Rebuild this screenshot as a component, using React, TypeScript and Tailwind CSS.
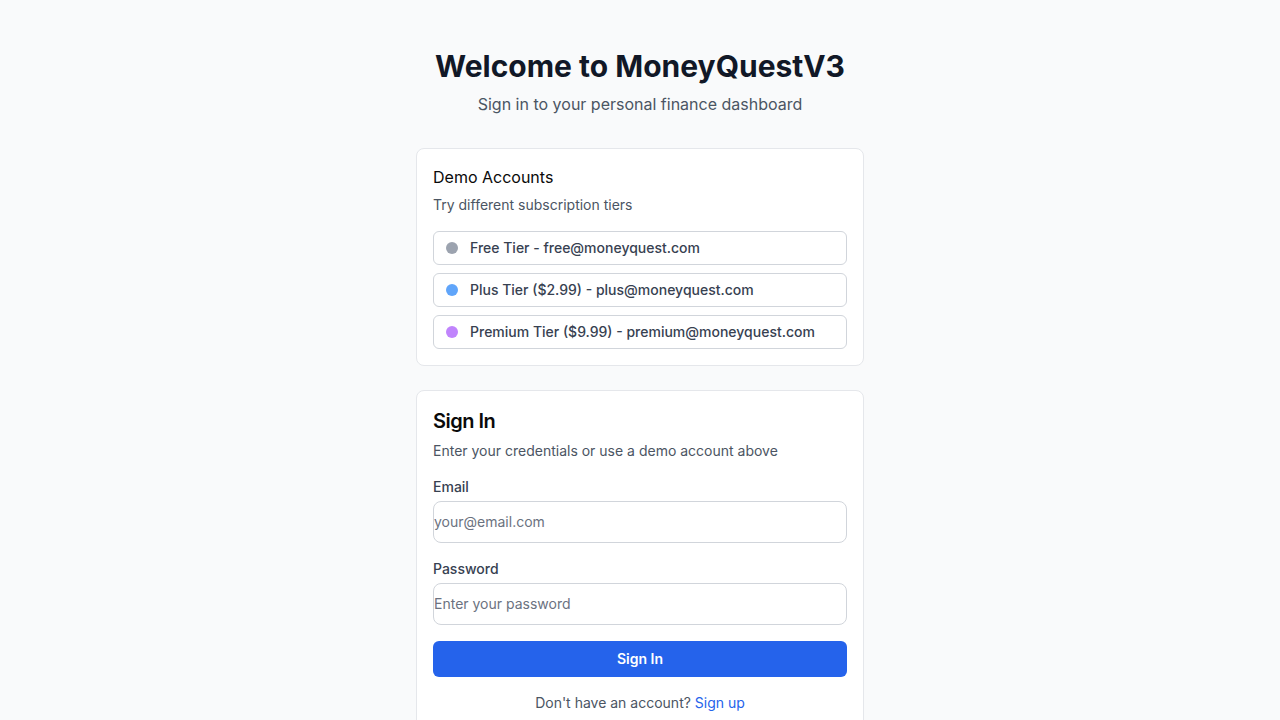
import React from "react";

export default function App() {
  const tiers = [
    { dot: "bg-[#9ca3af]", label: "Free Tier - free@moneyquest.com" },
    { dot: "bg-[#60a5fa]", label: "Plus Tier ($2.99) - plus@moneyquest.com" },
    { dot: "bg-[#c084fc]", label: "Premium Tier ($9.99) - premium@moneyquest.com" },
  ];
  return (
    <div className="min-h-screen bg-[#f9fafb]" style={{ fontFamily: "Inter, 'Noto Sans', sans-serif" }}>
      <div className="mx-auto w-[448px] pt-12 pb-12">
        <div className="text-center mb-8">
          <h1 className="text-3xl font-bold text-[#111827]">Welcome to MoneyQuestV3</h1>
          <p className="mt-2 text-base text-[#4b5563]">Sign in to your personal finance dashboard</p>
        </div>

        <div className="bg-white border border-[#e5e7eb] rounded-lg p-4">
          <h2 className="text-base font-normal text-[#0a0a0a]">Demo Accounts</h2>
          <p className="mt-1.5 text-sm text-[#4b5563]">Try different subscription tiers</p>
          <div className="mt-4 flex flex-col gap-2">
            {tiers.map((t) => (
              <button
                key={t.label}
                className="h-[34px] w-full flex items-center gap-3 px-3 border border-[#d1d5db] rounded-md bg-white text-sm font-medium text-[#374151] text-left"
              >
                <span className={`w-3 h-3 rounded-full ${t.dot}`} />
                <span>{t.label}</span>
              </button>
            ))}
          </div>
        </div>

        <div className="mt-6 bg-white border border-[#e5e7eb] rounded-lg p-4">
          <h2 className="text-xl font-semibold tracking-tight text-[#0a0a0a]">Sign In</h2>
          <p className="mt-1.5 text-sm text-[#4b5563]">Enter your credentials or use a demo account above</p>

          <div className="mt-4">
            <label className="block text-sm font-medium text-[#374151]">Email</label>
            <input
              type="email"
              placeholder="your@email.com"
              className="mt-1 block w-full h-[42px] pb-px border border-[#d1d5db] rounded-lg text-sm placeholder:text-[#6b7280] outline-none"
            />
          </div>

          <div className="mt-4">
            <label className="block text-sm font-medium text-[#374151]">Password</label>
            <input
              type="password"
              placeholder="Enter your password"
              className="mt-1 block w-full h-[42px] pb-px border border-[#d1d5db] rounded-lg text-sm placeholder:text-[#6b7280] outline-none"
            />
          </div>

          <button className="mt-4 w-full h-9 rounded-md bg-[#2563eb] text-white text-sm font-semibold">
            Sign In
          </button>

          <p className="mt-4 text-center text-sm text-[#4b5563]">
            Don't have an account? <a className="text-[#2563eb]">Sign up</a>
          </p>
        </div>
      </div>
    </div>
  );
}
